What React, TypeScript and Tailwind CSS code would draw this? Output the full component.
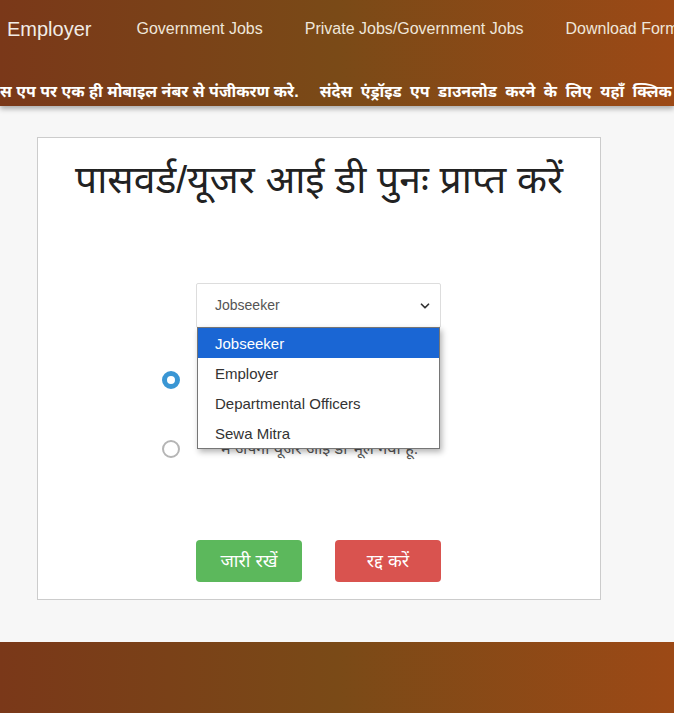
import { ChevronDown } from 'lucide-react';

const navLinks = ['Government Jobs', 'Private Jobs/Government Jobs', 'Download Form'];
const roles = ['Jobseeker', 'Employer', 'Departmental Officers', 'Sewa Mitra'];

function Radio({ checked }: { checked?: boolean }) {
  return checked ? (
    <span className="block w-[18px] h-[18px] rounded-full border-[5px] border-[#3a96d4] bg-white shrink-0" />
  ) : (
    <span className="block w-[18px] h-[18px] rounded-full border-2 border-[#b5b5b5] bg-white shrink-0" />
  );
}

export default function App() {
  return (
    <div className="w-[674px] h-[713px] overflow-hidden bg-[#f7f7f7] font-['Liberation_Sans',_'Noto_Sans',_sans-serif]">
      {/* Header */}
      <div className="relative z-10 bg-[linear-gradient(to_right,#7a3819,#7a4a17,#9c4916)] shadow-[0_3px_5px_rgba(0,0,0,0.3)]">
        <div className="flex items-center h-[56px] pt-[2px] whitespace-nowrap overflow-hidden">
          <span className="pl-[7px] text-[20px] text-[#f1ece6] pr-[45px]">Employer</span>
          {navLinks.map((l) => (
            <span key={l} className="text-[16px] text-[#efe6da] mr-[42px]">
              {l}
            </span>
          ))}
        </div>
        <div className="h-[50px] overflow-hidden whitespace-nowrap pt-[28px] font-bold text-[16px] text-white leading-none">
          <span>स एप पर एक ही मोबाइल नंबर से पंजीकरण करे.</span>
          <span className="inline-block w-[21px]" />
          <span className="[word-spacing:4px]">संदेस एंड्रॉइड एप डाउनलोड करने के लिए यहाँ क्लिक करें</span>
        </div>
      </div>

      {/* Card */}
      <div className="pt-[31px]">
        <div className="ml-[37px] w-[564px] h-[463px] bg-white border border-[#cccccc]">
          <h1 className="text-center text-[39px] text-[#222] leading-none pt-[22px]">
            पासवर्ड/यूजर आई डी पुनः प्राप्त करें
          </h1>

          <div className="relative ml-[158px] mt-[84px] w-[245px]">
            <div className="flex items-center justify-between h-[45px] border border-[#dddddd] rounded-[2px] pl-[18px] pr-[8px] text-[14px] text-[#555]">
              <span>Jobseeker</span>
              <ChevronDown className="w-[14px] h-[14px] text-[#333]" strokeWidth={3} />
            </div>

            {/* open dropdown list */}
            <div className="absolute z-20 left-[1px] top-[44px] w-[243px] bg-white border border-[#767676] shadow-[2px_3px_6px_rgba(0,0,0,0.3)] text-[15px]">
              {roles.map((r, i) => (
                <div
                  key={r}
                  className={`h-[30px] flex items-center pl-[17px] pt-[2px] ${i === 0 ? 'bg-[#1a66d4] text-white' : 'text-[#333]'}`}
                >
                  {r}
                </div>
              ))}
            </div>
          </div>

          <div className="ml-[124px] mt-[41px] flex flex-col text-[16px] text-[#555]">
            <label className="flex items-center gap-[41px] h-[22px]">
              <Radio checked />
              <span>मैं अपना पासवर्ड भूल गया हूं.</span>
            </label>
            <label className="flex items-center gap-[41px] h-[22px] mt-[47px]">
              <Radio />
              <span>मैं अपना यूजर आई डी भूल गया हूं.</span>
            </label>
          </div>

          <div className="flex gap-[33px] ml-[158px] mt-[80px]">
            <button className="w-[106px] h-[42px] rounded-[4px] bg-[#5cb85c] text-white text-[18px]">जारी रखें</button>
            <button className="w-[106px] h-[42px] rounded-[4px] bg-[#d9534f] text-white text-[18px]">रद्द करें</button>
          </div>
        </div>
      </div>

      {/* Footer */}
      <div className="mt-[42px] h-[80px] bg-[linear-gradient(to_right,#7a3819,#7a4a17,#9c4916)]" />
    </div>
  );
}
